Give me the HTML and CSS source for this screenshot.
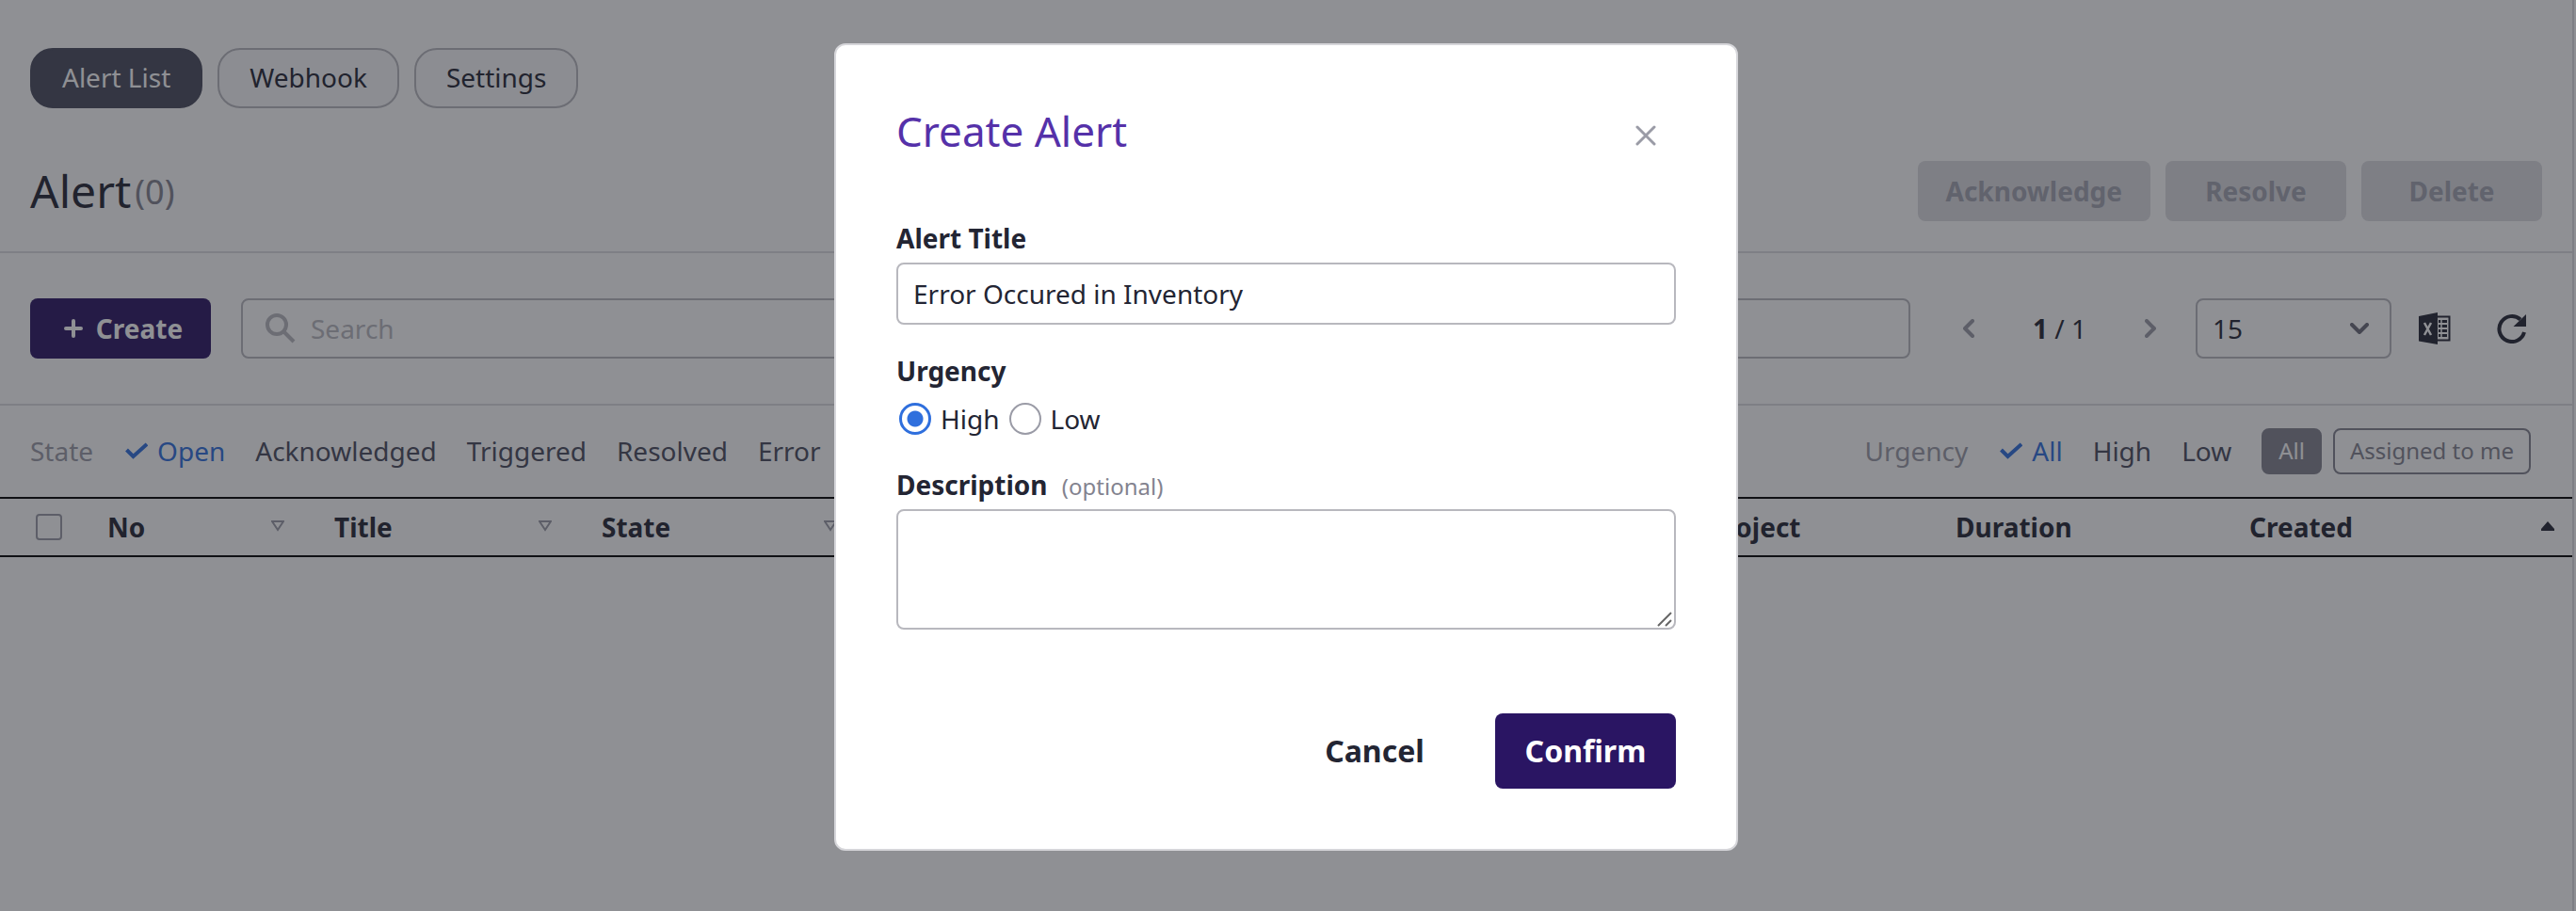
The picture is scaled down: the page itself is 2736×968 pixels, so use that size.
FILE: index.html
```html
<!DOCTYPE html>
<html lang="en">
<head>
<meta charset="utf-8">
<title>Alert</title>
<link rel="stylesheet" href="styles.css">
</head>
<body>
<div class="page">
  <nav class="tabs">
    <button type="button" class="tab tab-active">Alert List</button>
    <button type="button" class="tab">Webhook</button>
    <button type="button" class="tab">Settings</button>
  </nav>

  <header class="heading">
    <h1 class="heading-title">Alert<span class="heading-count">(0)</span></h1>
    <div class="heading-actions">
      <button type="button" class="action" disabled>Acknowledge</button>
      <button type="button" class="action" disabled>Resolve</button>
      <button type="button" class="action" disabled>Delete</button>
    </div>
  </header>

  <div class="toolbar">
    <button type="button" class="create">
      <svg class="create-icon" viewBox="0 0 20 20" aria-hidden="true"><path d="M10 2v16M2 10h16" fill="none" stroke="currentColor" stroke-width="4" stroke-linecap="round"/></svg>
      Create
    </button>
    <label class="search">
      <svg class="search-icon" viewBox="0 0 32 32" aria-hidden="true"><circle cx="12" cy="12" r="10" fill="none" stroke="currentColor" stroke-width="4"/><path d="M19 19L30 30" fill="none" stroke="currentColor" stroke-width="4"/></svg>
      <input type="search" class="search-input" placeholder="Search" aria-label="Search">
    </label>
    <div class="pager">
      <button type="button" class="pager-button" aria-label="Previous page"><svg class="pager-icon" viewBox="0 0 12 20"><path d="M10 2L2 10l8 8" fill="none" stroke="currentColor" stroke-width="4" stroke-linecap="round" stroke-linejoin="round"/></svg></button>
      <span><b>1</b> / 1</span>
      <button type="button" class="pager-button" aria-label="Next page"><svg class="pager-icon" viewBox="0 0 12 20"><path d="M2 2l8 8-8 8" fill="none" stroke="currentColor" stroke-width="4" stroke-linecap="round" stroke-linejoin="round"/></svg></button>
    </div>
    <div class="size">
      <select class="size-select" aria-label="Page size"><option>15</option><option>30</option></select>
      <svg class="size-icon" viewBox="0 0 20 12" aria-hidden="true"><path d="M2 2l8 8 8-8" fill="none" stroke="currentColor" stroke-width="4" stroke-linecap="round" stroke-linejoin="round"/></svg>
    </div>
    <button type="button" class="tool" aria-label="Export to Excel">
      <svg class="excel-icon" viewBox="0 0 36 34"><path d="M20 4.500h13.500v25H20" fill="none" stroke="currentColor" stroke-width="2"/><path d="M22 8h9v3h-9zM22 13h9v3h-9zM22 18h9v3h-9zM22 23h9v3h-9z" fill="currentColor"/><path d="M25 6v22" stroke="#fff" stroke-width="1.500"/><path d="M1 4L21 0v34L1 30.500z" fill="currentColor"/><path d="M7 11l7 13M14 11L7 24" stroke="#fff" stroke-width="2.500"/></svg>
    </button>
    <button type="button" class="tool" aria-label="Refresh">
      <svg class="refresh-icon" viewBox="0 0 32 32"><path d="M29 20A13.500 13.500 0 1 1 25 6.500" fill="none" stroke="currentColor" stroke-width="4"/><path d="M31 1v13H17.500z" fill="currentColor"/></svg>
    </button>
  </div>

  <div class="filters">
    <div class="filter-group">
      <span class="filter-label">State</span>
      <button type="button" class="filter filter-on"><svg class="check-icon" viewBox="0 0 26 20" aria-hidden="true"><path d="M3.500 9l7 7L25 3" fill="none" stroke="currentColor" stroke-width="4"/></svg>Open</button>
      <button type="button" class="filter">Acknowledged</button>
      <button type="button" class="filter">Triggered</button>
      <button type="button" class="filter">Resolved</button>
      <button type="button" class="filter">Error</button>
    </div>
    <div class="filter-group">
      <span class="filter-label">Urgency</span>
      <button type="button" class="filter filter-on"><svg class="check-icon" viewBox="0 0 26 20" aria-hidden="true"><path d="M3.500 9l7 7L25 3" fill="none" stroke="currentColor" stroke-width="4"/></svg>All</button>
      <button type="button" class="filter">High</button>
      <button type="button" class="filter">Low</button>
      <span class="chips">
        <button type="button" class="chip chip-on">All</button>
        <button type="button" class="chip">Assigned to me</button>
      </span>
    </div>
  </div>

  <table class="alerts">
    <colgroup><col class="col-check"><col class="col-no"><col class="col-title"><col class="col-state"><col class="col-wide"><col class="col-project"><col class="col-duration"><col></colgroup>
    <thead>
      <tr>
        <th><input type="checkbox" class="check" aria-label="Select all"></th>
        <th><span class="head">No<svg class="sort" viewBox="0 0 14 12"><path d="M1 1h12L7 10z" fill="none" stroke="currentColor" stroke-width="2"/></svg></span></th>
        <th><span class="head">Title<svg class="sort" viewBox="0 0 14 12"><path d="M1 1h12L7 10z" fill="none" stroke="currentColor" stroke-width="2"/></svg></span></th>
        <th><span class="head">State<svg class="sort" viewBox="0 0 14 12"><path d="M1 1h12L7 10z" fill="none" stroke="currentColor" stroke-width="2"/></svg></span></th>
        <th></th>
        <th>Project</th>
        <th>Duration</th>
        <th><span class="head">Created<svg class="sort sort-on" viewBox="0 0 14 12"><path d="M7 1l7 8v2H0V9z" fill="currentColor"/></svg></span></th>
      </tr>
    </thead>
  </table>
</div>

<div class="overlay">
  <form class="modal" role="dialog" aria-labelledby="modal-title">
    <div class="modal-head">
      <h2 class="modal-title" id="modal-title">Create Alert</h2>
      <button type="button" class="close" aria-label="Close"><svg class="close-icon" viewBox="0 0 22 22"><path d="M2 2l18 18M20 2L2 20" fill="none" stroke="currentColor" stroke-width="3" stroke-linecap="round"/></svg></button>
    </div>
    <label class="label" for="title">Alert Title</label>
    <input type="text" class="field" id="title" value="Error Occured in Inventory">
    <fieldset class="urgency">
      <legend class="label">Urgency</legend>
      <div class="radios">
        <label class="choice"><input type="radio" class="radio" name="urgency" checked>High</label>
        <label class="choice"><input type="radio" class="radio" name="urgency">Low</label>
      </div>
    </fieldset>
    <label class="label" for="description">Description <span class="optional">(optional)</span></label>
    <div class="area-wrap">
      <textarea class="field area" id="description"></textarea>
      <svg class="grip" viewBox="0 0 16 16" aria-hidden="true"><path d="M1 15L15 1M9 15l6-6" fill="none" stroke="currentColor" stroke-width="2"/></svg>
    </div>
    <div class="modal-actions">
      <button type="button" class="modal-button">Cancel</button>
      <button type="submit" class="modal-button confirm">Confirm</button>
    </div>
  </form>
</div>
</body>
</html>
```
FILE: styles.css
```css
* { box-sizing: border-box; }
body {
  margin: 0;
  background: #fff;
  color: #232533;
  font: 28px/40px "Noto Sans", sans-serif;
}
button, input, select, textarea { font: inherit; color: inherit; }
button { padding: 0; border: 0; background: none; white-space: nowrap; }
svg { display: block; flex: none; }

.page {
  min-height: 100vh;
  margin-right: 2px;
  border-right: 2px solid #dcdce0;
}

.tabs { display: flex; gap: 16px; padding: 51px 32px 0; }
.tab {
  height: 64px;
  padding: 0 32px 2px;
  border: 2px solid #b8b8be;
  border-radius: 24px;
  background: #f8f8fa;
}
.tab-active { border-color: #484a5c; background: #484a5c; color: #fff; }

.heading {
  display: flex;
  align-items: center;
  justify-content: space-between;
  height: 154px;
  padding: 48px 32px 24px;
  border-bottom: 2px solid #dcdce0;
}
.heading-title { margin: 0; font-weight: 400; font-size: 48px; line-height: 64px; }
.heading-count { margin-left: 4px; color: #83838f; font-size: 36px; vertical-align: 4px; }
.heading-actions { display: flex; gap: 16px; }
.action {
  min-width: 192px;
  height: 64px;
  padding: 0 30px;
  border-radius: 8px;
  background: #dcdce0;
  color: #a3a4b0;
  font-weight: 700;
}

.toolbar {
  display: flex;
  align-items: center;
  height: 162px;
  padding: 0 40px 0 32px;
  border-bottom: 2px solid #dcdce0;
}
.create {
  display: flex;
  align-items: center;
  justify-content: center;
  gap: 14px;
  width: 192px;
  height: 64px;
  padding-left: 6px;
  border-radius: 8px;
  background: #2a1563;
  color: #fff;
  font-weight: 700;
}
.create-icon { width: 20px; height: 20px; }
.search {
  display: flex;
  flex: 1;
  align-items: center;
  gap: 16px;
  height: 64px;
  margin: 0 40px 0 32px;
  padding: 0 24px;
  border: 2px solid #b8b8be;
  border-radius: 8px;
  color: #b8b8be;
}
.search-icon { width: 32px; height: 32px; }
.search-input { flex: 1; min-width: 0; padding: 0; border: 0; outline: 0; background: none; }
.search-input::placeholder { color: #b8b8be; opacity: 1; }
.pager { display: flex; align-items: center; gap: 46px; margin-right: 26px; }
.pager-button { display: grid; place-items: center; width: 44px; height: 44px; color: #9a9ba6; }
.pager-icon { width: 12px; height: 20px; }
.size { display: grid; align-items: center; margin-right: 22px; }
.size-select {
  grid-area: 1 / 1;
  width: 208px;
  height: 64px;
  padding: 0 16px;
  border: 2px solid #b8b8be;
  border-radius: 8px;
  background: none;
  appearance: none;
}
.size-icon { grid-area: 1 / 1; justify-self: end; width: 20px; height: 12px; margin-right: 24px; color: #6a6b78; }
.tool { display: grid; place-items: center; width: 48px; height: 48px; }
.tool + .tool { margin-left: 34px; }
.excel-icon { width: 36px; height: 34px; }
.refresh-icon { width: 32px; height: 32px; }

.filters {
  display: flex;
  align-items: center;
  justify-content: space-between;
  height: 97px;
  padding: 0 44px 0 32px;
}
.filter-group { display: flex; align-items: center; gap: 32px; }
.filter-label { padding-bottom: 2px; color: #9a9ba6; }
.filter { display: flex; align-items: center; gap: 10px; padding-bottom: 2px; color: #484a5c; }
.filter-on { color: #2f6fdd; }
.check-icon { width: 26px; height: 20px; }
.chips { display: flex; gap: 12px; }
.chip {
  height: 49px;
  padding: 0 16px 2px;
  border: 2px solid #83838f;
  border-radius: 8px;
  color: #83838f;
  font-size: 24px;
}
.chip-on { background: #83838f; color: #fff; }

.alerts {
  width: 100%;
  table-layout: fixed;
  border-collapse: separate;
  border-spacing: 0;
  border-block: 2px solid #000;
}
.alerts th { height: 60px; padding: 0 10px; text-align: left; font-weight: 700; white-space: nowrap; }
.alerts th:first-child { padding-left: 38px; }
.col-check { width: 104px; }
.col-no { width: 241px; }
.col-title { width: 284px; }
.col-state { width: 303px; }
.col-wide { width: 872px; }
.col-project { width: 263px; }
.col-duration { width: 312px; }
.head { display: flex; justify-content: space-between; }
.sort { width: 14px; height: 12px; margin: 13px 33px 0 0; color: #9a9ba6; }
.sort-on { margin-right: 9px; color: #232533; }
.check {
  display: block;
  width: 28px;
  height: 28px;
  margin: 0;
  border: 2px solid #9a9ba6;
  border-radius: 4px;
  appearance: none;
}

.overlay {
  position: fixed;
  inset: 0;
  display: grid;
  place-items: start center;
  padding: 46px 4px 0 0;
  background: rgba(31, 33, 41, 0.5);
}
.modal {
  width: 960px;
  padding: 64px;
  border: 2px solid #d6d6da;
  border-radius: 12px;
  background: #fff;
}
.modal-head { display: flex; justify-content: space-between; height: 121px; }
.modal-title { margin: 0; color: #5531a9; font-weight: 400; font-size: 44px; line-height: 54px; }
.close { display: grid; place-items: center; width: 64px; height: 64px; color: #9a9ba6; }
.close-icon { width: 22px; height: 22px; }
.label { display: block; padding: 0; font-weight: 700; }
.field {
  display: block;
  width: 100%;
  height: 66px;
  margin-top: 6px;
  padding: 0 16px;
  border: 2px solid #b8b8be;
  border-radius: 8px;
  outline: 0;
  background: #fff;
}
.area-wrap { position: relative; }
.area { height: 128px; padding: 12px 16px; resize: vertical; }
.area::-webkit-resizer { background: none; }
.grip { position: absolute; right: 4px; bottom: 3px; width: 16px; height: 16px; color: #666; pointer-events: none; }
.urgency { min-width: 0; margin: 29px 0 30px; padding: 0; border: 0; }
.radios { display: flex; gap: 10px; margin-top: 11px; padding-left: 3px; }
.choice { display: flex; align-items: center; gap: 10px; }
.radio {
  width: 34px;
  height: 34px;
  margin: 0;
  border: 2px solid #9a9ba6;
  border-radius: 50%;
  appearance: none;
}
.radio:checked { border: 3px solid #2f6fdd; background: radial-gradient(circle, #2f6fdd 8px, #fff 9px); }
.optional { margin-left: 8px; color: #83838f; font-weight: 400; font-size: 24px; line-height: 24px; }
.modal-actions { display: flex; justify-content: flex-end; gap: 32px; margin-top: 89px; }
.modal-button { width: 192px; height: 80px; border-radius: 8px; font-weight: 700; font-size: 32px; }
.confirm { background: #2a1563; color: #fff; }
```
